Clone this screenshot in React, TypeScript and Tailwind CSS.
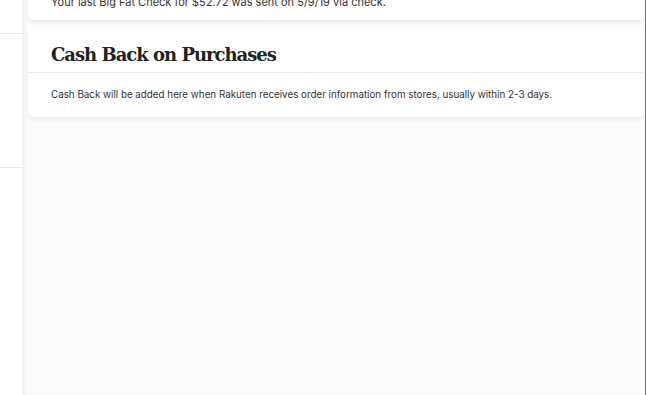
export default function App() {
  return (
    <div className="flex h-screen w-full overflow-hidden bg-white" style={{ fontFamily: 'Inter, "Liberation Sans", sans-serif' }}>
      {/* Sidebar */}
      <aside className="w-[22px] shrink-0 bg-white">
        <div className="h-[34px] border-b border-[#e6e6e6]" />
        <div className="h-[134px] border-b border-[#e6e6e6]" />
      </aside>

      {/* Main */}
      <main className="flex-1 bg-[#fcfcfd] shadow-[inset_4px_0_4px_-2px_rgba(0,0,0,0.07)] pl-[6px]">
        {/* Big Fat Check card */}
        <section className="-mt-[6px] rounded-b-md bg-white pl-[23px] pb-[10px] shadow-[0_2px_5px_rgba(0,0,0,0.08)]">
          <p className="text-[11px] leading-4 text-[#333]">
            Your last Big Fat Check for $52.72 was sent on 5/9/19 via check.
          </p>
        </section>

        {/* Cash Back on Purchases card */}
        <section className="mt-2 rounded-md bg-white shadow-[0_2px_5px_rgba(0,0,0,0.08)]">
          <div className="flex h-[45px] items-end border-b border-[#ececec] pl-[23px] pb-[5px]">
            <h2
              className="text-[18px] font-bold leading-6 tracking-[-1px] text-[#222]"
              style={{ fontFamily: '"DejaVu Serif", serif' }}
            >
              Cash Back on Purchases
            </h2>
          </div>
          <div className="flex h-[44px] items-center pl-[23px]">
            <p className="text-[9.8px] text-[#333]">
              Cash Back will be added here when Rakuten receives order information from stores, usually within 2-3 days.
            </p>
          </div>
        </section>
      </main>

      {/* Window edge */}
      <div className="w-px shrink-0 bg-[#777]" />
      <div className="w-px shrink-0 bg-white" />
    </div>
  );
}
